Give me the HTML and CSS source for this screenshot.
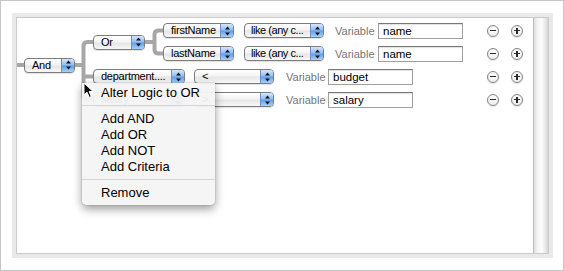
FILE: index.html
```html
<!DOCTYPE html>
<html>
<head>
<meta charset="utf-8">
<link rel="stylesheet" href="styles.css">
</head>
<body>
<div class="window">
  <div class="frame">
    <div class="editor">
      <div class="tree-area">
        <svg class="connectors" width="470" height="120" viewBox="0 0 470 120">
          <path d="M0 47 H10 M56 47 H66.5 M66.5 58.5 H80 M126 24 H137.5" />
          <path d="M80 24 H70.5 Q66.5 24 66.5 28 V77.5 Q66.5 81.5 70.5 81.5 H80" />
          <path d="M149 12.5 H141.5 Q137.5 12.5 137.5 16.5 V31.5 Q137.5 35.5 141.5 35.5 H149" />
        </svg>
        <div class="tree">
          <div class="popup w-and"><span class="lbl">And</span><span class="arr"><svg width="7" height="10" viewBox="0 0 7 10"><path d="M3.5 0.5 L6 3.5 H1 Z M3.5 9.5 L6 6.5 H1 Z"/></svg></span></div>
          <div class="children">
            <div class="group">
              <div class="popup w-or"><span class="lbl">Or</span><span class="arr"><svg width="7" height="10" viewBox="0 0 7 10"><path d="M3.5 0.5 L6 3.5 H1 Z M3.5 9.5 L6 6.5 H1 Z"/></svg></span></div>
              <div class="rows">
                <div class="row">
                  <div class="popup w-fn"><span class="lbl">firstName</span><span class="arr"><svg width="7" height="10" viewBox="0 0 7 10"><path d="M3.5 0.5 L6 3.5 H1 Z M3.5 9.5 L6 6.5 H1 Z"/></svg></span></div>
                  <div class="popup w-like"><span class="lbl">like (any c...</span><span class="arr"><svg width="7" height="10" viewBox="0 0 7 10"><path d="M3.5 0.5 L6 3.5 H1 Z M3.5 9.5 L6 6.5 H1 Z"/></svg></span></div>
                  <span class="var var-a">Variable</span>
                  <div class="field">name</div>
                </div>
                <div class="row">
                  <div class="popup w-fn"><span class="lbl">lastName</span><span class="arr"><svg width="7" height="10" viewBox="0 0 7 10"><path d="M3.5 0.5 L6 3.5 H1 Z M3.5 9.5 L6 6.5 H1 Z"/></svg></span></div>
                  <div class="popup w-like"><span class="lbl">like (any c...</span><span class="arr"><svg width="7" height="10" viewBox="0 0 7 10"><path d="M3.5 0.5 L6 3.5 H1 Z M3.5 9.5 L6 6.5 H1 Z"/></svg></span></div>
                  <span class="var var-a">Variable</span>
                  <div class="field">name</div>
                </div>
              </div>
            </div>
            <div class="row">
              <div class="popup w-dept"><span class="lbl">department....</span><span class="arr"><svg width="7" height="10" viewBox="0 0 7 10"><path d="M3.5 0.5 L6 3.5 H1 Z M3.5 9.5 L6 6.5 H1 Z"/></svg></span></div>
              <div class="popup w-op"><span class="lbl">&lt;</span><span class="arr"><svg width="7" height="10" viewBox="0 0 7 10"><path d="M3.5 0.5 L6 3.5 H1 Z M3.5 9.5 L6 6.5 H1 Z"/></svg></span></div>
              <span class="var var-b">Variable</span>
              <div class="field">budget</div>
            </div>
            <div class="row">
              <div class="popup w-dept"><span class="lbl">salary</span><span class="arr"><svg width="7" height="10" viewBox="0 0 7 10"><path d="M3.5 0.5 L6 3.5 H1 Z M3.5 9.5 L6 6.5 H1 Z"/></svg></span></div>
              <div class="popup w-op"><span class="lbl">&gt;</span><span class="arr"><svg width="7" height="10" viewBox="0 0 7 10"><path d="M3.5 0.5 L6 3.5 H1 Z M3.5 9.5 L6 6.5 H1 Z"/></svg></span></div>
              <span class="var var-b">Variable</span>
              <div class="field">salary</div>
            </div>
          </div>
        </div>
      </div>
      <div class="actions">
        <div class="act-row"><span class="circle minus"></span><span class="circle plus"></span></div>
        <div class="act-row"><span class="circle minus"></span><span class="circle plus"></span></div>
        <div class="act-row"><span class="circle minus"></span><span class="circle plus"></span></div>
        <div class="act-row"><span class="circle minus"></span><span class="circle plus"></span></div>
      </div>
      <div class="scroller"></div>
    </div>
  </div>

  <div class="menu">
    <div class="item">Alter Logic to OR</div>
    <div class="sep"></div>
    <div class="item">Add AND</div>
    <div class="item">Add OR</div>
    <div class="item">Add NOT</div>
    <div class="item">Add Criteria</div>
    <div class="sep"></div>
    <div class="item">Remove</div>
  </div>

  <svg class="cursor" width="12" height="17" viewBox="0 0 12 17">
    <path d="M1 1 L1 13 L4 10.2 L6.3 15.4 L8.3 14.5 L6.1 9.5 L10 9.5 Z" fill="#000" stroke="#fff" stroke-width="1"/>
  </svg>
</div>
</body>
</html>
```

FILE: styles.css
```css
* { box-sizing: border-box; }

body {
  margin: 0;
  font-family: "Liberation Sans", Arial, sans-serif;
  color: #000;
}

.window {
  position: relative;
  width: 564px;
  height: 271px;
  border: 1px solid #c6c6c6;
  background: #fff;
  padding: 12px 0 0 11px;
}

.frame {
  width: 541px;
  height: 245px;
  background: #e9e9e9;
  padding: 4px;
}

.editor {
  height: 100%;
  display: flex;
  background: #fff;
  border: 1px solid #cbcbcb;
}

.tree-area {
  position: relative;
  flex: 1;
  padding: 1px 0 0 7px;
}

.connectors {
  position: absolute;
  left: 0;
  top: 0;
  z-index: 0;
}

.connectors path {
  fill: none;
  stroke: #a7a7a7;
  stroke-width: 4;
}

.tree {
  position: relative;
  z-index: 1;
  display: flex;
  align-items: center;
  gap: 18px;
}

.children {
  display: flex;
  flex-direction: column;
}

.group {
  display: flex;
  align-items: center;
  gap: 18px;
}

.rows {
  display: flex;
  flex-direction: column;
}

.row {
  height: 23px;
  display: flex;
  align-items: center;
}

.popup {
  display: flex;
  height: 15px;
  border: 1px solid #7c7c7c;
  border-radius: 4px;
  background: linear-gradient(#ffffff, #f4f4f4 45%, #e6e6e6 55%, #f8f8f8);
  box-shadow: 0 1px 1px rgba(0, 0, 0, 0.12);
  font-size: 11px;
  overflow: hidden;
  flex: none;
}

.popup .lbl {
  flex: 1;
  padding-left: 7px;
  line-height: 13px;
  white-space: nowrap;
  letter-spacing: -0.25px;
}

.popup .arr {
  width: 13px;
  flex: none;
  display: flex;
  align-items: center;
  justify-content: center;
  border-left: 1px solid #6d8fc4;
  background: linear-gradient(#d3e6fb, #8fbcf3 48%, #5f9dec 52%, #a7d0f9);
}

.popup .arr path { fill: #111; }

.w-and { width: 51px; }
.w-or { width: 52px; }
.w-fn { width: 71px; margin-right: 10px; }
.w-like { width: 80px; }
.w-like .lbl { padding-left: 6px; letter-spacing: -0.45px; }
.w-dept { width: 92px; margin-right: 9px; }
.w-op { width: 80px; }

.var {
  font-size: 11px;
  color: #767676;
}

.var-a { margin-left: 11px; width: 43px; }
.var-b { margin-left: 12px; width: 42px; }

.field {
  width: 85px;
  height: 16px;
  border: 1px solid #a0a0a0;
  border-top-color: #777;
  background: #fff;
  box-shadow: inset 0 1px 1px rgba(0, 0, 0, 0.12);
  font-size: 11.5px;
  line-height: 14px;
  padding-left: 4px;
}

.actions {
  display: flex;
  flex-direction: column;
  padding: 1px 10px 0 0;
}

.act-row {
  height: 23px;
  display: flex;
  align-items: center;
  gap: 12px;
}

.circle {
  position: relative;
  width: 12px;
  height: 12px;
  border-radius: 50%;
  border: 1px solid #858585;
  background: radial-gradient(circle at 50% 35%, #ffffff, #e8e8e8);
  box-shadow: 0 1px 1px rgba(0, 0, 0, 0.12);
}

.circle::before {
  content: "";
  position: absolute;
  left: 2px;
  top: 4.5px;
  width: 6px;
  height: 1.2px;
  background: #2a2a2a;
}

.plus::after {
  content: "";
  position: absolute;
  left: 4.4px;
  top: 2px;
  width: 1.2px;
  height: 6px;
  background: #2a2a2a;
}

.scroller {
  width: 15px;
  border-left: 1px solid #bcbcbc;
  background: linear-gradient(90deg, #dedede, #f4f4f4 25%, #fcfcfc 55%, #e9e9e9 80%, #d6d6d6);
}

.menu {
  position: absolute;
  left: 81px;
  top: 82px;
  width: 133px;
  padding: 2px 0 4px;
  background: rgba(244, 244, 244, 0.95);
  border-radius: 0 0 5px 5px;
  box-shadow: 0 4px 10px rgba(0, 0, 0, 0.4), 0 0 0 1px rgba(0, 0, 0, 0.05);
  font-size: 13px;
  z-index: 5;
}

.menu .item {
  height: 16px;
  line-height: 16px;
  padding-left: 19px;
  white-space: nowrap;
}

.menu .sep {
  height: 1px;
  background: #d6d6d6;
  margin: 4px 0 5px;
}

.cursor {
  position: absolute;
  left: 82px;
  top: 81px;
  z-index: 6;
}
```
